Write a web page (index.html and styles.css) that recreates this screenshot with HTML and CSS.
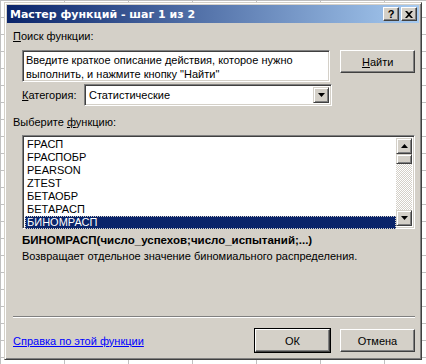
FILE: index.html
```html
<!DOCTYPE html>
<html lang="ru">
<head>
  <meta charset="UTF-8">
  <title>Мастер функций - шаг 1 из 2</title>
  <link rel="stylesheet" href="styles.css">
</head>
<body>
  <div class="dialog">
    <div class="titlebar">
      <span class="title">Мастер функций - шаг 1 из 2</span>
      <div class="title-buttons">
        <span class="tbtn">?</span>
        <span class="tbtn tbtn-close">
          <svg width="8" height="7" viewBox="0 0 8 7"><path d="M0 0h2l2 2 2-2h2L5 3.5 8 7H6L4 5 2 7H0l3-3.5z" fill="#000"/></svg>
        </span>
      </div>
    </div>

    <div class="content">
      <div class="label"><u>П</u>оиск функции:</div>
      <div class="search-row">
        <div class="sunken search-box">Введите краткое описание действия, которое нужно выполнить, и нажмите кнопку "Найти"</div>
        <button class="btn"><u>Н</u>айти</button>
      </div>

      <div class="category-row">
        <span class="cat-label"><u>К</u>атегория:</span>
        <div class="sunken combo">
          <span class="combo-text">Статистические</span>
          <span class="arrow-btn">
            <svg width="7" height="4" viewBox="0 0 7 4"><path d="M0 0h7L3.5 4z" fill="#000"/></svg>
          </span>
        </div>
      </div>

      <div class="label label-list">Выберите <u>ф</u>ункцию:</div>
      <div class="sunken listbox">
        <ul class="items">
          <li>FРАСП</li>
          <li>FРАСПОБР</li>
          <li>PEARSON</li>
          <li>ZTEST</li>
          <li>БЕТАОБР</li>
          <li>БЕТАРАСП</li>
          <li class="selected">БИНОМРАСП</li>
        </ul>
        <div class="scrollbar">
          <span class="arrow-btn">
            <svg width="7" height="4" viewBox="0 0 7 4"><path d="M0 4h7L3.5 0z" fill="#000"/></svg>
          </span>
          <span class="thumb"></span>
          <span class="track"></span>
          <span class="arrow-btn">
            <svg width="7" height="4" viewBox="0 0 7 4"><path d="M0 0h7L3.5 4z" fill="#000"/></svg>
          </span>
        </div>
      </div>

      <div class="signature">БИНОМРАСП(число_успехов;число_испытаний;...)</div>
      <div class="description">Возвращает отдельное значение биномиального распределения.</div>

      <div class="spacer"></div>
      <div class="separator"></div>

      <div class="footer">
        <a class="help" href="#">Справка по этой функции</a>
        <div class="footer-buttons">
          <button class="btn btn-default">ОК</button>
          <button class="btn">Отмена</button>
        </div>
      </div>
    </div>
  </div>
</body>
</html>
```

FILE: styles.css
```css
body {
  margin: 0;
  padding: 2px 4px 4px 4px;
  height: 364px;
  box-sizing: border-box;
  overflow: hidden;
  background-color: #ffffff;
  background-image:
    linear-gradient(90deg, #c0c0c0 1px, transparent 1px),
    linear-gradient(#c0c0c0 1px, transparent 1px);
  background-size: 64px 17px;
  font-family: 'Liberation Sans', Arial, sans-serif;
  font-size: 11px;
  color: #000;
}

.dialog {
  height: 100%;
  box-sizing: border-box;
  display: flex;
  flex-direction: column;
  background-color: #d4d0c8;
  border: 1px solid;
  border-color: #d4d0c8 #404040 #404040 #d4d0c8;
  box-shadow: inset 1px 1px 0 #ffffff, inset -1px -1px 0 #808080;
  padding: 2px;
}

.titlebar {
  height: 18px;
  display: flex;
  align-items: center;
  justify-content: space-between;
  padding: 0 2px 0 3px;
  background: linear-gradient(90deg, #0a246a, #a6caf0);
  color: #fff;
}

.title {
  font-family: 'DejaVu Sans', sans-serif;
  font-weight: bold;
  font-size: 11px;
}

.title-buttons {
  display: flex;
  gap: 2px;
}

.tbtn {
  width: 16px;
  height: 14px;
  box-sizing: border-box;
  display: flex;
  align-items: center;
  justify-content: center;
  background: #d4d0c8;
  color: #000;
  font-weight: bold;
  font-size: 11px;
  border: 1px solid;
  border-color: #ffffff #404040 #404040 #ffffff;
  box-shadow: inset -1px -1px 0 #808080;
}

.content {
  flex: 1;
  display: flex;
  flex-direction: column;
  padding: 7px 4px 5px 6px;
}

.label {
  height: 13px;
  line-height: 13px;
}

.label-list {
  margin-top: 10px;
}

.search-row {
  display: flex;
  gap: 10px;
  margin: 7px 0 0 9px;
  align-items: flex-start;
}

.sunken {
  background: #fff;
  border: 1px solid;
  border-color: #808080 #ffffff #ffffff #808080;
  box-shadow: inset 1px 1px 0 #404040, inset -1px -1px 0 #d4d0c8;
  box-sizing: border-box;
}

.search-box {
  width: 310px;
  height: 32px;
  padding: 2px 3px;
  line-height: 14px;
}

.btn {
  width: 75px;
  height: 23px;
  box-sizing: border-box;
  background: #d4d0c8;
  font-family: 'Liberation Sans', Arial, sans-serif;
  font-size: 11px;
  color: #000;
  border: 1px solid;
  border-color: #ffffff #404040 #404040 #ffffff;
  box-shadow: inset -1px -1px 0 #808080;
  padding: 0;
}

.btn-default {
  outline: 1px solid #000;
  outline-offset: 0;
}

.category-row {
  display: flex;
  align-items: center;
  margin: 2px 0 0 9px;
}

.cat-label {
  width: 62px;
}

.combo {
  width: 248px;
  height: 22px;
  display: flex;
  align-items: center;
  justify-content: space-between;
  padding: 2px;
}

.combo-text {
  padding-left: 2px;
}

.arrow-btn {
  width: 16px;
  height: 16px;
  box-sizing: border-box;
  display: flex;
  align-items: center;
  justify-content: center;
  background: #d4d0c8;
  border: 1px solid;
  border-color: #d4d0c8 #404040 #404040 #d4d0c8;
  box-shadow: inset 1px 1px 0 #ffffff, inset -1px -1px 0 #808080;
}

.listbox {
  margin: 6px 0 0 9px;
  height: 94px;
  display: flex;
  padding: 2px;
}

.items {
  flex: 1;
  list-style: none;
  margin: 0;
  padding: 0;
}

.items li {
  height: 13px;
  line-height: 13px;
  padding-left: 2px;
}

.items li.selected {
  background: #0a246a;
  color: #fff;
  outline: 1px dotted #d4d0c8;
  outline-offset: -1px;
}

.scrollbar {
  width: 16px;
  display: flex;
  flex-direction: column;
}

.thumb {
  height: 8px;
  background: #d4d0c8;
  border: 1px solid;
  border-color: #d4d0c8 #404040 #404040 #d4d0c8;
  box-shadow: inset 1px 1px 0 #ffffff, inset -1px -1px 0 #808080;
}

.track {
  flex: 1;
  background-color: #eae8e4;
  background-image: repeating-conic-gradient(#d4d0c8 0 25%, #ffffff 0 50%);
  background-size: 2px 2px;
}

.signature {
  margin: 4px 0 0 9px;
  font-weight: bold;
  font-size: 11.5px;
  height: 14px;
  line-height: 14px;
}

.description {
  margin: 2px 0 0 9px;
  height: 14px;
  line-height: 14px;
}

.spacer {
  flex: 1;
}

.separator {
  height: 0;
  border-top: 1px solid #808080;
  border-bottom: 1px solid #ffffff;
}

.footer {
  display: flex;
  align-items: center;
  justify-content: space-between;
  margin-top: 11px;
}

.help {
  color: #0000ff;
  text-decoration: underline;
}

.footer-buttons {
  display: flex;
  gap: 10px;
}
```
